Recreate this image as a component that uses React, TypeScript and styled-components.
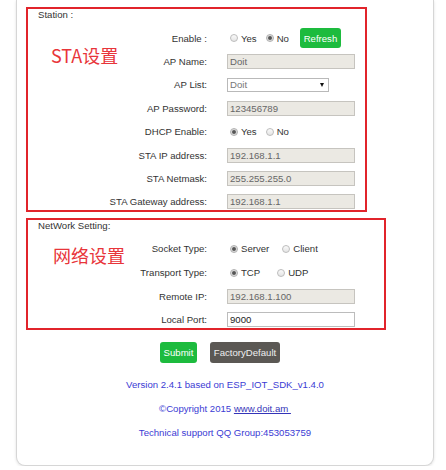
import React from "react";
import styled, { createGlobalStyle } from "styled-components";

const GlobalStyle = createGlobalStyle`
  html, body {
    margin: 0;
    padding: 0;
    background: #fff;
  }
  body {
    font-family: "Liberation Sans", Arial, sans-serif;
    font-size: 9.6px;
    color: #333;
  }
`;

interface RadioOption {
  label: string;
  checked?: boolean;
}

function RadioGroup({ name, options, spacing }: { name: string; options: RadioOption[]; spacing: number }) {
  return (
    <Options>
      {options.map((o) => (
        <RadioLabel key={o.label} $spacing={spacing}>
          <Radio type="radio" name={name} defaultChecked={o.checked} />
          {o.label}
        </RadioLabel>
      ))}
    </Options>
  );
}

function App() {
  return (
    <>
      <GlobalStyle />
      <Card>
        <Section $width={341}>
          <Title>Station :</Title>
          <Note $top={37} $left={23}>STA设置</Note>
          <Form $pitch={7.43}>
            <Label>Enable :</Label>
            <Value>
              <RadioGroup
                name="enable"
                spacing={6}
                options={[{ label: "Yes" }, { label: "No", checked: true }]}
              />
              <Button $tone="green" $wide={41} $tall={20} style={{ marginLeft: 11 }}>
                Refresh
              </Button>
            </Value>
            <Label>AP Name:</Label>
            <Value>
              <Field disabled defaultValue="Doit" />
            </Value>
            <Label>AP List:</Label>
            <Value>
              <SelectBox>
                <select defaultValue="Doit">
                  <option>Doit</option>
                </select>
              </SelectBox>
            </Value>
            <Label>AP Password:</Label>
            <Value>
              <Field disabled defaultValue="123456789" />
            </Value>
            <Label>DHCP Enable:</Label>
            <Value>
              <RadioGroup
                name="dhcp"
                spacing={6}
                options={[{ label: "Yes", checked: true }, { label: "No" }]}
              />
            </Value>
            <Label>STA IP address:</Label>
            <Value>
              <Field disabled defaultValue="192.168.1.1" />
            </Value>
            <Label>STA Netmask:</Label>
            <Value>
              <Field disabled defaultValue="255.255.255.0" />
            </Value>
            <Label>STA Gateway address:</Label>
            <Value>
              <Field disabled defaultValue="192.168.1.1" />
            </Value>
          </Form>
        </Section>

        <Section $width={360}>
          <Title>NetWork Setting:</Title>
          <Note $top={26} $left={25}>网络设置</Note>
          <Form $pitch={7.67}>
            <Label>Socket Type:</Label>
            <Value>
              <RadioGroup
                name="socket"
                spacing={10}
                options={[{ label: "Server", checked: true }, { label: "Client" }]}
              />
            </Value>
            <Label>Transport Type:</Label>
            <Value>
              <RadioGroup
                name="transport"
                spacing={14}
                options={[{ label: "TCP", checked: true }, { label: "UDP" }]}
              />
            </Value>
            <Label>Remote IP:</Label>
            <Value>
              <Field disabled defaultValue="192.168.1.100" />
            </Value>
            <Label>Local Port:</Label>
            <Value>
              <Field defaultValue="9000" />
            </Value>
          </Form>
        </Section>

        <ButtonRow>
          <Button $tone="green" $wide={37} $tall={21}>Submit</Button>
          <Button $tone="gray" $wide={70} $tall={21}>FactoryDefault</Button>
        </ButtonRow>

        <Footer>
          <p>Version 2.4.1 based on ESP_IOT_SDK_v1.4.0</p>
          <p>
            ©Copyright 2015 <a href="#">www.doit.am&nbsp;</a>
          </p>
          <p>Technical support QQ Group:453053759</p>
        </Footer>
      </Card>
    </>
  );
}

export default App;

const Card = styled.div`
  box-sizing: border-box;
  width: 418px;
  height: 466px;
  margin-left: 16px;
  padding: 7px 9px 0 9px;
  border: 1px solid #d6d6d6;
  border-top: none;
  border-radius: 0 0 9px 9px;
  box-shadow: 0 1px 3px rgba(0, 0, 0, 0.12);
  background: #fff;
`;

const Section = styled.div<{ $width: number }>`
  position: relative;
  box-sizing: border-box;
  width: ${(p) => p.$width}px;
  border: 2px solid #e1242b;
  margin-bottom: 6px;
`;

const Title = styled.div`
  height: 12px;
  line-height: 12px;
  padding-left: 10px;
  color: #333;
`;

const Note = styled.div<{ $top: number; $left: number }>`
  position: absolute;
  top: ${(p) => p.$top}px;
  left: ${(p) => p.$left}px;
  font-family: "Noto Sans CJK SC", "Noto Sans", sans-serif;
  font-size: 18px;
  line-height: 18px;
  color: #e8353a;
`;

const Form = styled.div<{ $pitch: number }>`
  display: grid;
  grid-template-columns: 179px 1fr;
  grid-auto-rows: 16px;
  column-gap: 20px;
  row-gap: ${(p) => p.$pitch}px;
  margin-top: 9px;
`;

const Label = styled.div`
  display: flex;
  align-items: center;
  justify-content: flex-end;
  white-space: nowrap;
  color: #333;
`;

const Value = styled.div`
  display: flex;
  align-items: center;
`;

const Options = styled.div`
  display: flex;
  align-items: center;
`;

const RadioLabel = styled.label<{ $spacing: number }>`
  display: inline-flex;
  align-items: center;
  margin-right: ${(p) => p.$spacing}px;
  color: #333;

  &:last-child {
    margin-right: 0;
  }
`;

const Radio = styled.input`
  appearance: none;
  box-sizing: border-box;
  width: 8px;
  height: 8px;
  margin: 0 3px 0 3px;
  border: 1px solid #bdbdbd;
  border-radius: 50%;
  background: linear-gradient(#fafafa, #e4e4e4);

  &:checked {
    background: radial-gradient(circle, #555 0, #555 1.4px, #d8d8d8 2.4px, #efefef 100%);
    border-color: #b0b0b0;
  }
`;

const Field = styled.input`
  box-sizing: border-box;
  width: 128px;
  height: 15px;
  padding: 0 2px;
  border: 1px solid #bcbcbc;
  background: #fff;
  font-family: "Liberation Sans", Arial, sans-serif;
  font-size: 9.6px;
  color: #222;
  outline: none;

  &:disabled {
    background: #ebe9e3;
    color: #666;
    border-color: #c6c4bf;
  }
`;

const SelectBox = styled.div`
  position: relative;
  width: 102px;
  height: 14px;

  select {
    appearance: none;
    box-sizing: border-box;
    width: 100%;
    height: 100%;
    padding: 0 2px;
    border: 1px solid #b9b9b9;
    border-radius: 0;
    background: #fff;
    font-family: "Liberation Sans", Arial, sans-serif;
    font-size: 9.6px;
    color: #777;
    outline: none;
  }

  &::after {
    content: "";
    position: absolute;
    right: 5px;
    top: 5px;
    border-left: 2.5px solid transparent;
    border-right: 2.5px solid transparent;
    border-top: 4px solid #111;
    pointer-events: none;
  }
`;

const Button = styled.button<{ $tone: "green" | "gray"; $wide: number; $tall: number }>`
  box-sizing: border-box;
  width: ${(p) => p.$wide}px;
  height: ${(p) => p.$tall}px;
  padding: 0;
  border: none;
  border-radius: 3px;
  background: ${(p) => (p.$tone === "green" ? "#1dbb3e" : "#5b5854")};
  color: ${(p) => (p.$tone === "green" ? "#fff" : "#eeeeee")};
  font-family: "Liberation Sans", Arial, sans-serif;
  font-size: 9.6px;
  white-space: nowrap;
`;

const ButtonRow = styled.div`
  display: flex;
  justify-content: center;
  gap: 13px;
  margin-top: 12px;
  padding-right: 10px;
`;

const Footer = styled.div`
  margin-top: 16px;
  text-align: center;
  color: #3b3bd4;

  p {
    margin: 0 0 12px;
    line-height: 12px;
  }

  a {
    color: #3434b8;
    text-decoration: underline;
  }
`;
